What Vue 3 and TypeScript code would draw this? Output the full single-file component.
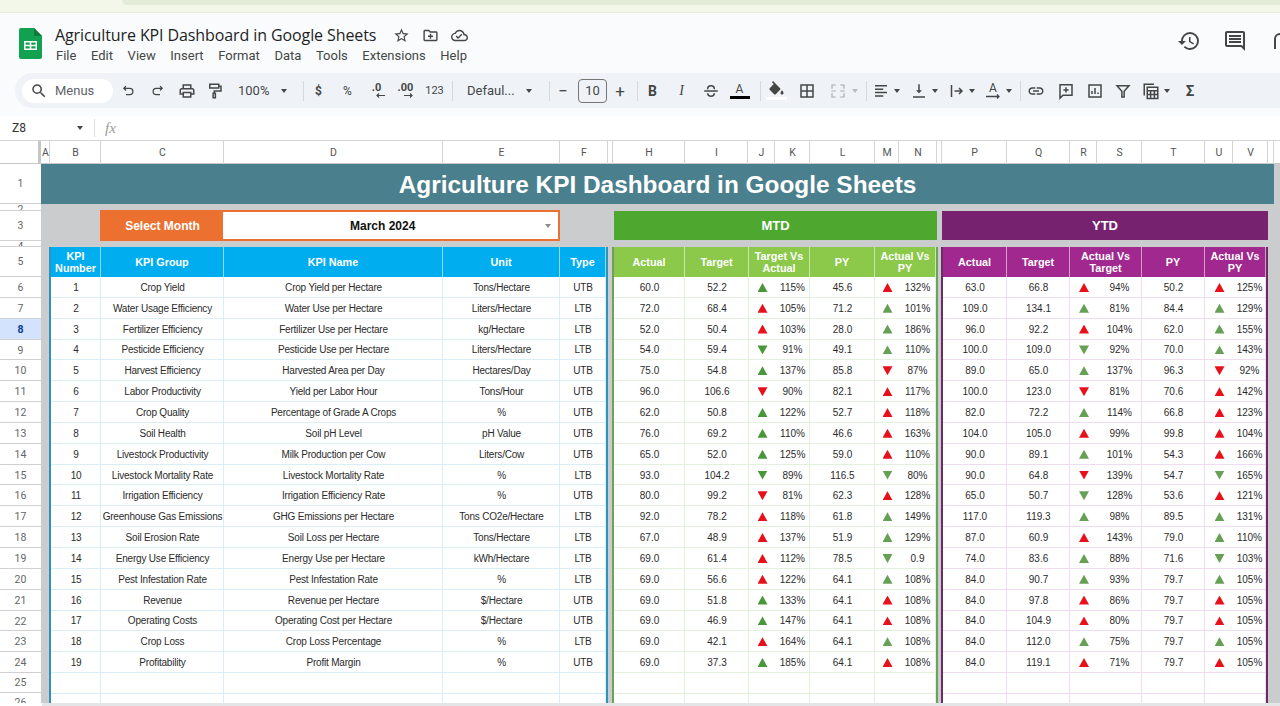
<script setup lang="ts">
interface Panel {
  key: string
  title: string
  headers: string[]
  rows: string[][]
}

const columnLabels = ['A', 'B', 'C', 'D', 'E', 'F', '', 'H', 'I', 'J', 'K', 'L', 'M', 'N', '', 'P', 'Q', 'R', 'S', 'T', 'U', 'V', '']

const kpis = [
  ['Crop Yield', 'Crop Yield per Hectare', 'Tons/Hectare', 'UTB'],
  ['Water Usage Efficiency', 'Water Use per Hectare', 'Liters/Hectare', 'LTB'],
  ['Fertilizer Efficiency', 'Fertilizer Use per Hectare', 'kg/Hectare', 'LTB'],
  ['Pesticide Efficiency', 'Pesticide Use per Hectare', 'Liters/Hectare', 'LTB'],
  ['Harvest Efficiency', 'Harvested Area per Day', 'Hectares/Day', 'UTB'],
  ['Labor Productivity', 'Yield per Labor Hour', 'Tons/Hour', 'UTB'],
  ['Crop Quality', 'Percentage of Grade A Crops', '%', 'UTB'],
  ['Soil Health', 'Soil pH Level', 'pH Value', 'UTB'],
  ['Livestock Productivity', 'Milk Production per Cow', 'Liters/Cow', 'UTB'],
  ['Livestock Mortality Rate', 'Livestock Mortality Rate', '%', 'LTB'],
  ['Irrigation Efficiency', 'Irrigation Efficiency Rate', '%', 'UTB'],
  ['Greenhouse Gas Emissions', 'GHG Emissions per Hectare', 'Tons CO2e/Hectare', 'LTB'],
  ['Soil Erosion Rate', 'Soil Loss per Hectare', 'Tons/Hectare', 'LTB'],
  ['Energy Use Efficiency', 'Energy Use per Hectare', 'kWh/Hectare', 'LTB'],
  ['Pest Infestation Rate', 'Pest Infestation Rate', '%', 'LTB'],
  ['Revenue', 'Revenue per Hectare', '$/Hectare', 'UTB'],
  ['Operating Costs', 'Operating Cost per Hectare', '$/Hectare', 'UTB'],
  ['Crop Loss', 'Crop Loss Percentage', '%', 'LTB'],
  ['Profitability', 'Profit Margin', '%', 'UTB'],
]

// actual target arrow pct py arrow pct (gu = green up, rd = red down, ...)
const mtdRows = [
  '60.0 52.2 gu 115% 45.6 ru 132%',
  '72.0 68.4 ru 105% 71.2 gu 101%',
  '52.0 50.4 ru 103% 28.0 gu 186%',
  '54.0 59.4 gd 91% 49.1 gu 110%',
  '75.0 54.8 gu 137% 85.8 rd 87%',
  '96.0 106.6 rd 90% 82.1 ru 117%',
  '62.0 50.8 gu 122% 52.7 ru 118%',
  '76.0 69.2 gu 110% 46.6 ru 163%',
  '65.0 52.0 gu 125% 59.0 ru 110%',
  '93.0 104.2 gd 89% 116.5 gd 80%',
  '80.0 99.2 rd 81% 62.3 ru 128%',
  '92.0 78.2 ru 118% 61.8 gu 149%',
  '67.0 48.9 ru 137% 51.9 gu 129%',
  '69.0 61.4 ru 112% 78.5 gd 0.9',
  '69.0 56.6 ru 122% 64.1 gu 108%',
  '69.0 51.8 gu 133% 64.1 ru 108%',
  '69.0 46.9 gu 147% 64.1 ru 108%',
  '69.0 42.1 ru 164% 64.1 gu 108%',
  '69.0 37.3 gu 185% 64.1 ru 108%',
]

const ytdRows = [
  '63.0 66.8 ru 94% 50.2 ru 125%',
  '109.0 134.1 gu 81% 84.4 gu 129%',
  '96.0 92.2 ru 104% 62.0 gu 155%',
  '100.0 109.0 gd 92% 70.0 gu 143%',
  '89.0 65.0 gu 137% 96.3 rd 92%',
  '100.0 123.0 rd 81% 70.6 ru 142%',
  '82.0 72.2 gu 114% 66.8 ru 123%',
  '104.0 105.0 ru 99% 99.8 ru 104%',
  '90.0 89.1 gu 101% 54.3 ru 166%',
  '90.0 64.8 rd 139% 54.7 gd 165%',
  '65.0 50.7 gd 128% 53.6 ru 121%',
  '117.0 119.3 gu 98% 89.5 gu 131%',
  '87.0 60.9 ru 143% 79.0 gu 110%',
  '74.0 83.6 gu 88% 71.6 gd 103%',
  '84.0 90.7 gu 93% 79.7 gu 105%',
  '84.0 97.8 ru 86% 79.7 ru 105%',
  '84.0 104.9 ru 80% 79.7 ru 105%',
  '84.0 112.0 gu 75% 79.7 gu 105%',
  '84.0 119.1 ru 71% 79.7 ru 105%',
]

const panels: Panel[] = [
  {
    key: 'mtd',
    title: 'MTD',
    headers: ['Actual', 'Target', 'Target Vs Actual', 'PY', 'Actual Vs PY'],
    rows: mtdRows.map((r) => r.split(' ')),
  },
  {
    key: 'ytd',
    title: 'YTD',
    headers: ['Actual', 'Target', 'Actual Vs Target', 'PY', 'Actual Vs PY'],
    rows: ytdRows.map((r) => r.split(' ')),
  },
]

const dataRowNumbers = Array.from({ length: 19 }, (_, i) => i + 6)
</script>

<template>
  <div class="page">
    <div class="browser-strip"><div class="strip-pill"></div></div>

    <header class="doc-head">
      <svg class="logo" viewBox="0 0 23 31">
        <path d="M2 0h13l8 8v21a2 2 0 0 1-2 2H2a2 2 0 0 1-2-2V2a2 2 0 0 1 2-2z" fill="#12a150" />
        <path d="M15 0l8 8h-8z" fill="#0c7a3b" />
        <path d="M5 13h13v9H5z M6.5 14.5v2.3h4.2v-2.3z M12.3 14.5v2.3h4.2v-2.3z M6.5 18.2v2.3h4.2v-2.3z M12.3 18.2v2.3h4.2v-2.3z" fill="#fff" fill-rule="evenodd" />
      </svg>
      <div class="doc-info">
        <div class="doc-title-row">
          <span class="doc-title">Agriculture KPI Dashboard in Google Sheets</span>
          <svg class="title-icon first" viewBox="0 0 24 24"><path d="M22 9.24l-7.19-.62L12 2 9.19 8.63 2 9.24l5.46 4.73L5.82 21 12 17.27 18.18 21l-1.63-7.03L22 9.24zM12 15.4l-3.76 2.27 1-4.28-3.32-2.88 4.38-.38L12 6.1l1.71 4.04 4.38.38-3.32 2.88 1 4.28L12 15.4z" /></svg>
          <svg class="title-icon" viewBox="0 0 24 24"><path d="M20 6h-8l-2-2H4c-1.1 0-2 .9-2 2v12c0 1.1.9 2 2 2h16c1.1 0 2-.9 2-2V8c0-1.1-.9-2-2-2zm0 12H4V6h5.17l2 2H20v10zM13 9.5h-2V12H8.5v2H11v2.5h2V14h2.5v-2H13z" /></svg>
          <svg class="title-icon" viewBox="0 0 24 24"><path d="M19.35 10.04C18.67 6.59 15.64 4 12 4 9.11 4 6.6 5.64 5.35 8.04 2.34 8.36 0 10.91 0 14c0 3.31 2.69 6 6 6h13c2.76 0 5-2.24 5-5 0-2.64-2.05-4.78-4.65-4.96zM19 18H6c-2.21 0-4-1.79-4-4 0-2.05 1.53-3.76 3.56-3.97l1.07-.11.5-.95C8.08 7.14 9.94 6 12 6c2.62 0 4.88 1.86 5.39 4.43l.3 1.5 1.53.11c1.56.1 2.78 1.41 2.78 2.96 0 1.65-1.35 3-3 3zm-9-3.82l-2.09-2.09L6.5 13.5 10 17l6.01-6.01-1.41-1.41z" /></svg>
        </div>
        <nav class="menu">
          <span>File</span><span>Edit</span><span>View</span><span>Insert</span><span>Format</span><span>Data</span><span>Tools</span><span>Extensions</span><span>Help</span>
        </nav>
      </div>
      <div class="head-right">
        <svg viewBox="0 0 24 24"><path d="M13 3a9 9 0 0 0-9 9H1l3.89 3.89.07.14L9 12H6c0-3.87 3.13-7 7-7s7 3.13 7 7-3.13 7-7 7c-1.93 0-3.68-.79-4.94-2.06l-1.42 1.42A8.954 8.954 0 0 0 13 21a9 9 0 0 0 0-18zm-1 5v5l4.28 2.54.72-1.21-3.5-2.08V8H12z" /></svg>
        <svg viewBox="0 0 24 24"><path d="M21.99 4c0-1.1-.89-2-1.99-2H4c-1.1 0-2 .9-2 2v12c0 1.1.9 2 2 2h14l4 4-.01-18zM20 4v13.17L18.83 16H4V4h16zM6 12h12v2H6zm0-3h12v2H6zm0-3h12v2H6z" /></svg>
        <svg viewBox="0 0 24 24"><path class="line" d="M6 20V10a5 5 0 0 1 5-5h13" /></svg>
      </div>
    </header>

    <div class="toolbar-wrap">
      <div class="toolbar">
        <div class="menus-pill">
          <svg class="ico" viewBox="0 0 24 24"><path d="M15.5 14h-.79l-.28-.27A6.471 6.471 0 0 0 16 9.5 6.5 6.5 0 1 0 9.5 16c1.61 0 3.09-.59 4.23-1.57l.27.28v.79l5 4.99L20.49 19l-4.99-5zm-6 0C7.01 14 5 11.99 5 9.5S7.01 5 9.5 5 14 7.01 14 9.5 11.99 14 9.5 14z" /></svg>
          <span>Menus</span>
        </div>

        <div class="tool"><svg class="ico hist" viewBox="0 0 24 24"><path class="line" d="M8 5L4.5 8.5 8 12M5 8.5h9a5 5 0 0 1 0 10H8" /></svg></div>
        <div class="tool"><svg class="ico hist" viewBox="0 0 24 24"><path class="line" d="M16 5l3.5 3.5L16 12M19 8.5h-9a5 5 0 0 0 0 10h6" /></svg></div>
        <div class="tool"><svg class="ico" viewBox="0 0 24 24"><path d="M19 8h-1V3H6v5H5c-1.66 0-3 1.34-3 3v6h4v4h12v-4h4v-6c0-1.66-1.34-3-3-3zM8 5h8v3H8V5zm8 12v2H8v-4h8v2zm2-2v-2H6v2H4v-4c0-.55.45-1 1-1h14c.55 0 1 .45 1 1v4h-2z" /></svg></div>
        <div class="tool w28"><svg class="ico" viewBox="0 0 24 24"><path class="line" d="M5 3h12v5H5zM17 5.5h3V12h-9v3M9.5 15h3v6h-3z" /></svg></div>

        <div class="tool zoom-tool"><span>100%</span><i class="caret"></i></div>
        <div class="sep s6"></div>

        <div class="tool txt bold">$</div>
        <div class="tool txt">%</div>
        <div class="tool dec">
          <span>.0</span>
          <svg viewBox="0 0 12 5"><path class="line" d="M11 2.5H3M5 .5L3 2.5l2 2" /></svg>
        </div>
        <div class="tool dec">
          <span>.00</span>
          <svg viewBox="0 0 12 5"><path class="line" d="M1 2.5h8M7 .5l2 2-2 2" /></svg>
        </div>
        <div class="tool txt small">123</div>
        <div class="sep s3"></div>

        <div class="tool font-tool"><span>Defaul...</span><i class="caret"></i></div>
        <div class="sep s9"></div>

        <div class="tool w26 txt big">−</div>
        <div class="size-box">10</div>
        <div class="tool w26 txt big">+</div>
        <div class="sep s4"></div>

        <div class="tool txt fmt bold">B</div>
        <div class="tool txt fmt italic">I</div>
        <div class="tool"><svg class="ico" viewBox="0 0 24 24"><path class="line" d="M3 12h18M7.5 9.5c0-6 9-6 9 0M7.5 15c.5 5.5 8.5 5.5 9 0" /></svg></div>
        <div class="tool colour-tool"><span>A</span><i class="black-bar"></i></div>
        <div class="sep s6"></div>

        <div class="tool w30 colour-tool">
          <svg class="fill-ico" viewBox="0 0 24 20"><path d="M16.56 8.94L7.62 0 6.21 1.41l2.38 2.38-5.15 5.15c-.59.59-.59 1.54 0 2.12l5.5 5.5c.29.29.68.44 1.06.44s.77-.15 1.06-.44l5.5-5.5c.59-.58.59-1.53 0-2.12zM19 11.5s-2 2.17-2 3.5c0 1.1.9 2 2 2s2-.9 2-2c0-1.33-2-3.5-2-3.5z" /></svg>
          <i class="white-bar"></i>
        </div>
        <div class="tool w31"><svg class="ico" viewBox="0 0 24 24"><path class="line" d="M4 4h16v16H4zM12 4v16M4 12h16" /></svg></div>
        <div class="tool dd merge">
          <svg class="ico" viewBox="0 0 24 24"><path class="line faint" d="M4 9V4h5M20 9V4h-5M4 15v5h5M20 15v5h-5M3 12h6M21 12h-6" /></svg>
          <i class="caret faint"></i>
        </div>
        <div class="sep s4"></div>

        <div class="tool dd">
          <svg class="ico" viewBox="0 0 24 24"><path class="line" d="M4 5h16M4 9.5h11M4 14h16M4 18.5h11" /></svg>
          <i class="caret"></i>
        </div>
        <div class="tool dd w37">
          <svg class="ico" viewBox="0 0 24 24"><path d="M16 11h-3V3h-2v8H8l4 4 4-4zM4 19v2h16v-2H4z" /></svg>
          <i class="caret"></i>
        </div>
        <div class="tool dd w37">
          <svg class="ico" viewBox="0 0 24 24"><path class="line" d="M6 4v16M10 12h10M16 8l4 4-4 4" /></svg>
          <i class="caret"></i>
        </div>
        <div class="tool dd w37">
          <span class="rotate-ico">
            <span>A</span>
            <svg viewBox="0 0 16 5"><path class="line" d="M1 2.5h13M12 .5l2 2-2 2" /></svg>
          </span>
          <i class="caret"></i>
        </div>
        <div class="sep s4"></div>

        <div class="tool w30"><svg class="ico" viewBox="0 0 24 24"><path d="M3.9 12c0-1.71 1.39-3.1 3.1-3.1h4V7H7c-2.76 0-5 2.24-5 5s2.24 5 5 5h4v-1.9H7c-1.71 0-3.1-1.39-3.1-3.1zM8 13h8v-2H8v2zm9-6h-4v1.9h4c1.71 0 3.1 1.39 3.1 3.1s-1.39 3.1-3.1 3.1h-4V17h4c2.76 0 5-2.24 5-5s-2.24-5-5-5z" /></svg></div>
        <div class="tool"><svg class="ico" viewBox="0 0 24 24"><path class="line" d="M4 3.5h16v14H8l-4 4zM12 7v7M8.5 10.500h7" /></svg></div>
        <div class="tool"><svg class="ico" viewBox="0 0 24 24"><path class="line" d="M4 4h16v16H4zM8 16v-4M12 16V8M16 16v-2" /></svg></div>
        <div class="tool w28"><svg class="ico" viewBox="0 0 24 24"><path class="line" d="M4 5h16l-6.500 7.500V20h-3v-7.500z" /></svg></div>
        <div class="tool dd">
          <svg class="ico" viewBox="0 0 24 24"><path class="line" d="M3 18V3h13M7 7h14v15H7zM7 11.5h14M7 16.5h14M11.5 11.5V22M16.5 11.5V22" /></svg>
          <i class="caret"></i>
        </div>
        <div class="tool w30 txt sigma">Σ</div>
      </div>
    </div>

    <div class="formula-bar">
      <span class="cell-ref">Z8</span>
      <i class="caret"></i>
      <span class="fx-sep"></span>
      <span class="fx">fx</span>
    </div>

    <div class="col-heads">
      <div class="corner"></div>
      <div v-for="(c, i) in columnLabels" :key="i" class="col-head">{{ c }}</div>
    </div>

    <div class="sheet">
      <div class="row-heads">
        <div class="row-head r1">1</div>
        <div class="row-head r2">2</div>
        <div class="row-head r3">3</div>
        <div class="row-head r4">4</div>
        <div class="row-head r3">5</div>
        <div
          v-for="n in dataRowNumbers"
          :key="n"
          class="row-head rdata"
          :class="{ active: n === 8 }"
        >{{ n }}</div>
        <div class="row-head r25">25</div>
        <div class="row-head r25">26</div>
      </div>

      <main class="board">
        <div class="banner">Agriculture KPI Dashboard in Google Sheets</div>

        <div class="controls">
          <div class="month-picker">
            <div class="month-label">Select Month</div>
            <div class="month-value">
              <span>March 2024</span>
              <i class="caret grey"></i>
            </div>
          </div>
          <div class="period mtd">MTD</div>
          <div class="period ytd">YTD</div>
        </div>

        <div class="tables">
          <div class="tbl kpi">
            <div class="th">KPI Number</div>
            <div class="th">KPI Group</div>
            <div class="th">KPI Name</div>
            <div class="th">Unit</div>
            <div class="th">Type</div>
            <template v-for="(row, i) in kpis" :key="row[0]">
              <div class="td">{{ i + 1 }}</div>
              <div v-for="cell in row" :key="cell" class="td">{{ cell }}</div>
            </template>
            <template v-for="n in 10" :key="n">
              <div class="td"></div>
            </template>
          </div>

          <div v-for="p in panels" :key="p.key" class="tbl" :class="p.key">
            <div class="th">{{ p.headers[0] }}</div>
            <div class="th">{{ p.headers[1] }}</div>
            <div class="th span2">{{ p.headers[2] }}</div>
            <div class="th">{{ p.headers[3] }}</div>
            <div class="th span2">{{ p.headers[4] }}</div>
            <template v-for="(r, i) in p.rows" :key="i">
              <div class="td">{{ r[0] }}</div>
              <div class="td">{{ r[1] }}</div>
              <div class="td no-div strong-green"><i class="arrow" :class="r[2]"></i></div>
              <div class="td">{{ r[3] }}</div>
              <div class="td">{{ r[4] }}</div>
              <div class="td no-div"><i class="arrow" :class="r[5]"></i></div>
              <div class="td">{{ r[6] }}</div>
            </template>
            <template v-for="n in 14" :key="n">
              <div class="td" :class="{ 'no-div': n === 3 || n === 6 || n === 10 || n === 13 }"></div>
            </template>
          </div>
        </div>
      </main>
    </div>

    <div class="h-scroll"></div>
  </div>
</template>

<style>
html,
body {
  margin: 0;
  overflow: hidden;
}
</style>

<style scoped>
.page {
  width: 1280px;
  height: 706px;
  display: flex;
  flex-direction: column;
  overflow: hidden;
  background: #fff;
  font-family: "Liberation Sans", Arial, sans-serif;
  color: #2b2b2b;
}

.browser-strip {
  height: 13px;
  flex-shrink: 0;
  background: #f3f7e9;
  border-bottom: 1px solid #e6ebd9;
  box-sizing: border-box;
  padding-left: 122px;
}

.strip-pill {
  height: 5px;
  background: #e3ebd9;
  border-bottom-left-radius: 6px;
}

.doc-head {
  height: 60px;
  flex-shrink: 0;
  display: flex;
  background: #f9fbfd;
  padding-left: 19px;
  font-family: Roboto, "Liberation Sans", sans-serif;
  color: #3c4043;
}

.logo {
  width: 23px;
  height: 31px;
  margin-top: 15px;
  flex-shrink: 0;
}

.doc-info {
  margin-left: 13px;
  padding-top: 12px;
}

.doc-title-row {
  display: flex;
  align-items: center;
  height: 20px;
}

.doc-title {
  font-family: "Open Sans", sans-serif;
  font-size: 16px;
  letter-spacing: -0.1px;
  color: #1f1f1f;
  white-space: nowrap;
}

.title-icon {
  width: 17px;
  height: 17px;
  margin-left: 12px;
  fill: #444746;
}

.title-icon.first {
  margin-left: 17px;
}

.menu {
  display: flex;
  gap: 14.6px;
  margin-top: 3px;
  padding-left: 1px;
  font-size: 13px;
  line-height: 16px;
  color: #444746;
}

.head-right {
  margin-left: auto;
  width: 103px;
  flex-shrink: 0;
  display: flex;
  gap: 22px;
  padding-top: 16px;
  overflow: hidden;
}

.head-right svg {
  width: 24px;
  height: 24px;
  flex-shrink: 0;
  fill: #444746;
}

.line {
  fill: none;
  stroke: #444746;
  stroke-width: 2;
}

.toolbar-wrap {
  height: 43px;
  flex-shrink: 0;
  box-sizing: border-box;
  background: #f9fbfd;
  padding-left: 15px;
}

.toolbar {
  height: 35px;
  display: flex;
  align-items: center;
  background: #eff3f8;
  border-radius: 18px 0 0 18px;
  padding-left: 7px;
  font-family: Roboto, "Liberation Sans", sans-serif;
  font-size: 13px;
  color: #444746;
}

.menus-pill {
  width: 91px;
  height: 24px;
  box-sizing: border-box;
  display: flex;
  align-items: center;
  gap: 7px;
  padding-left: 8px;
  background: #fff;
  border-radius: 12px;
  margin-right: 1px;
  color: #5f6368;
}

.ico {
  width: 18px;
  height: 18px;
  flex-shrink: 0;
  fill: #444746;
}

.ico.hist {
  width: 15px;
  height: 15px;
}

.tool {
  width: 29px;
  height: 24px;
  flex-shrink: 0;
  display: flex;
  align-items: center;
  justify-content: center;
}

.w26 { width: 26px; }
.w28 { width: 28px; }
.w30 { width: 30px; }
.w31 { width: 31px; }

.txt { font-size: 12px; }
.small { font-size: 11px; }
.big { font-size: 17px; }
.bold { font-weight: 700; }
.italic { font-style: italic; font-family: "Liberation Serif", serif; }
.fmt { font-size: 14px; color: #444746; }
.sigma { font-size: 15px; font-weight: 700; }

.caret {
  display: block;
  flex-shrink: 0;
  width: 0;
  height: 0;
  border-left: 3.5px solid transparent;
  border-right: 3.5px solid transparent;
  border-top: 4px solid #444746;
}

.caret.faint { border-top-color: #b8bcc0; }
.caret.grey { border-top-color: #8a8a8a; }
.line.faint { stroke: #a9adb2; stroke-width: 1.6; }

.zoom-tool {
  width: 68px;
  justify-content: flex-start;
  gap: 12px;
  padding-left: 9px;
  box-sizing: border-box;
}

.font-tool {
  width: 87px;
  justify-content: flex-start;
  gap: 11px;
  padding-left: 14px;
  box-sizing: border-box;
}

.sep {
  width: 1px;
  height: 20px;
  flex-shrink: 0;
  background: #d5d8dc;
}

.s3 { margin-left: 3px; }
.s4 { margin-left: 4px; }
.s6 { margin-left: 6px; }
.s9 { margin-left: 9px; }

.dec {
  flex-direction: column;
  font-size: 11px;
  font-weight: 700;
  line-height: 10px;
}

.dec svg {
  width: 12px;
  height: 5px;
  margin-left: 6px;
}

.dec .line { stroke-width: 1.2; }

.size-box {
  width: 29px;
  height: 24px;
  box-sizing: border-box;
  margin-left: 2px;
  flex-shrink: 0;
  border: 1px solid #747775;
  border-radius: 4px;
  text-align: center;
  line-height: 22px;
  font-size: 13px;
}

.colour-tool {
  flex-direction: column;
  font-size: 12px;
  line-height: 13px;
}

.black-bar {
  width: 20px;
  height: 3px;
  background: #000;
}

.fill-ico {
  width: 19px;
  height: 16px;
  fill: #444746;
}

.white-bar {
  width: 21px;
  height: 3px;
  background: #fff;
}

.dd {
  width: 38px;
  justify-content: flex-start;
  gap: 4px;
  padding-left: 5px;
  box-sizing: border-box;
}

.w37 { width: 37px; }

.merge {
  width: 40px;
  gap: 5px;
  padding-left: 7px;
}

.rotate-ico {
  width: 18px;
  display: flex;
  flex-direction: column;
  align-items: center;
  font-size: 12px;
  line-height: 12px;
}

.rotate-ico svg {
  width: 16px;
  height: 5px;
}

.rotate-ico .line { stroke-width: 1.3; }

.formula-bar {
  height: 25px;
  flex-shrink: 0;
  box-sizing: border-box;
  display: flex;
  align-items: center;
  padding-left: 12px;
  background: #fff;
  border-bottom: 1px solid #d4d4d4;
  font-family: Roboto, "Liberation Sans", sans-serif;
  font-size: 12px;
  color: #333;
}

.cell-ref { width: 65px; }

.fx-sep {
  width: 1px;
  height: 18px;
  margin-left: 11px;
  background: #dadce0;
}

.fx {
  margin-left: 10px;
  font-family: "Liberation Serif", serif;
  font-style: italic;
  font-size: 15px;
  color: #9a9a9a;
}

.col-heads {
  height: 23px;
  flex-shrink: 0;
  box-sizing: border-box;
  display: grid;
  grid-template-columns: 41px 9px 51px 123px 219px 117px 48px 5px 72px 63px 27px 35px 65px 24px 38px 5px 65px 63px 27px 45px 63px 28px 35px 6px;
  border-bottom: 1px solid #c7c7c7;
  background: #fff;
}

.corner {
  border-right: 3px solid #c4c7c5;
  border-bottom: 3px solid #c4c7c5;
  box-sizing: border-box;
  margin-bottom: -1px;
}

.col-head {
  box-sizing: border-box;
  padding-left: 1px;
  border-right: 1px solid #d4d4d4;
  text-align: center;
  font-family: Roboto, "Liberation Sans", sans-serif;
  font-size: 10.5px;
  line-height: 24px;
  color: #555;
}

.sheet {
  flex: 1;
  min-height: 0;
  display: flex;
  overflow: hidden;
}

.row-heads {
  width: 41px;
  flex-shrink: 0;
  background: #fff;
}

.row-head {
  box-sizing: border-box;
  border-bottom: 1px solid #d0d0d0;
  text-align: center;
  overflow: hidden;
  font-family: Roboto, "Liberation Sans", sans-serif;
  font-size: 10.5px;
  color: #666;
}

.r1 { height: 40px; line-height: 39px; }
.r2 { height: 7px; line-height: 12px; }
.r3 { height: 30px; line-height: 29px; }
.r4 { height: 6px; line-height: 12px; }
.rdata { height: 20.85px; line-height: 21px; }
.r25 { height: 20px; line-height: 20px; }

.row-head.active {
  background: #d3e3fd;
  color: #0b3d91;
  font-weight: 700;
}

.board {
  flex: 1;
  min-width: 0;
  background: #cbcccd;
  padding-right: 6px;
}

.banner {
  height: 40px;
  background: #4a7f8d;
  color: #fff;
  text-align: center;
  font-size: 24.4px;
  font-weight: 700;
  line-height: 41px;
}

.controls {
  display: flex;
  height: 31px;
  margin: 6px 0 6px 59px;
}

.month-picker {
  display: flex;
  width: 460px;
  box-sizing: border-box;
  border: 2px solid #ec7130;
  font-size: 12px;
  font-weight: 700;
}

.month-label {
  width: 121px;
  background: #ec7130;
  color: #fff;
  text-align: center;
  line-height: 28px;
}

.month-value {
  flex: 1;
  display: flex;
  align-items: center;
  justify-content: space-between;
  background: #fff;
  color: #111;
  padding: 0 7px 0 127px;
}

.period {
  color: #fff;
  font-size: 13px;
  font-weight: 700;
  line-height: 29px;
  text-align: center;
  height: 29px;
  margin-top: 1px;
}

.period.mtd {
  width: 323px;
  margin-left: 54px;
  background: #4ea72e;
}

.period.ytd {
  width: 326px;
  margin-left: 5px;
  background: #76226e;
}

.tables {
  display: flex;
  margin-left: 8px;
  height: 460px;
}

.tbl {
  display: grid;
  grid-template-rows: 30px;
  grid-auto-rows: 20.85px;
  box-sizing: border-box;
  background: #fff;
  border-left: 2px solid;
  border-right: 2px solid;
  font-size: 10px;
}

.th {
  display: flex;
  align-items: center;
  justify-content: center;
  text-align: center;
  box-sizing: border-box;
  padding: 0 2px;
  color: #fff;
  font-size: 10.8px;
  font-weight: 700;
  line-height: 12px;
  border-right: 1px solid rgba(255, 255, 255, 0.55);
}

.span2 { grid-column: span 2; }

.td {
  display: flex;
  align-items: center;
  justify-content: center;
  box-sizing: border-box;
  padding: 1px 0 0 1px;
  white-space: nowrap;
  overflow: hidden;
  border-right: 1px solid;
  border-bottom: 1px solid;
}

.no-div { border-right: none; }

.kpi {
  width: 559px;
  grid-template-columns: 50px 123px 219px 117px 46px;
  border-color: #2d95bb;
  letter-spacing: -0.2px;
}

.kpi .th {
  background: #00aeef;
  letter-spacing: 0;
}

.kpi .td { border-color: #d9eef6; }

.tbl.mtd {
  width: 326px;
  margin-left: 4px;
  grid-template-columns: 71px 64px 26px 35px 65px 24px 37px;
  border-color: #6aa35c;
}

.tbl.mtd .th { background: #8cc94b; }
.tbl.mtd .td { border-color: #e3f0dc; }

.tbl.ytd {
  width: 327px;
  margin-left: 3px;
  grid-template-columns: 64px 63px 27px 45px 63px 28px 33px;
  border-color: #6b2c66;
}

.tbl.ytd .th { background: #a0288f; }
.tbl.ytd .td { border-color: #f0dcf0; }

.arrow {
  display: block;
  width: 10px;
  height: 9px;
}

.ru, .gu { clip-path: polygon(50% 0, 100% 100%, 0 100%); }
.rd, .gd { clip-path: polygon(0 0, 100% 0, 50% 100%); }
.ru, .rd { background: #e8101a; }
.gu, .gd { background: #66a055; }
.mtd .strong-green .gu,
.mtd .strong-green .gd { background: #48983a; }

.h-scroll {
  height: 3px;
  flex-shrink: 0;
  margin-left: 42px;
  background: #e3e5e7;
}
</style>
